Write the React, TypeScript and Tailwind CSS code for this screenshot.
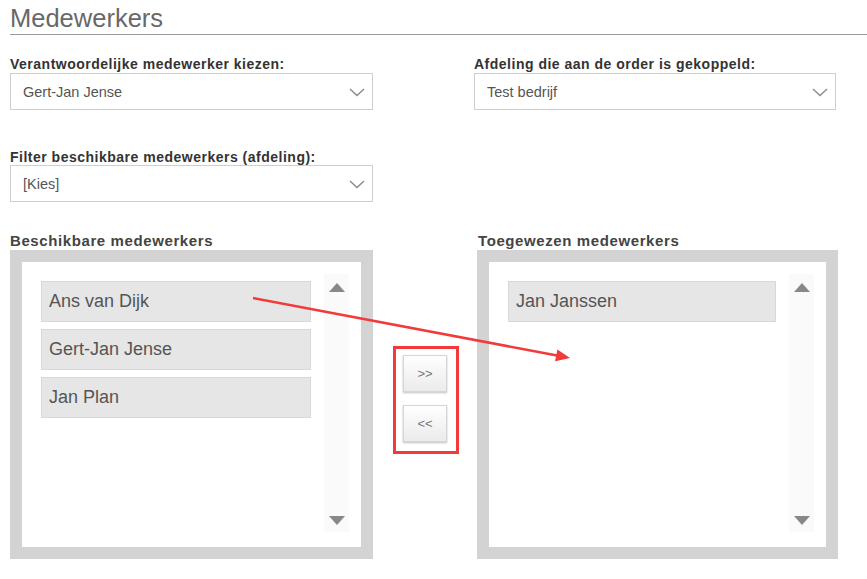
import React from "react";

function Chevron() {
  return (
    <svg width="16" height="9" viewBox="0 0 16 9" className="shrink-0">
      <polyline points="1,1 8,7.5 15,1" fill="none" stroke="#8a8a8a" strokeWidth="1.4" />
    </svg>
  );
}

function Select({ value, w }: { value: string; w: string }) {
  return (
    <div className={`${w} h-[37px] border border-[#cfcfcf] bg-white flex items-center justify-between pl-[12px] pr-[7px] pt-[2px]`}>
      <span className="text-[14.5px] text-[#555]">{value}</span>
      <Chevron />
    </div>
  );
}

function Label({ children }: { children: React.ReactNode }) {
  return <div className="text-[14px] leading-[16px] font-bold text-[#333] tracking-[0.5px]">{children}</div>;
}

function ListBox({ items, itemW, w }: { items: string[]; itemW: string; w: string }) {
  return (
    <div className={`${w} h-[309px] bg-[#d3d3d3] p-[12px]`}>
      <div className="h-full bg-white flex pt-[12px] pb-[15px] pl-[12px] pr-[12px]">
        <div className="flex-1 flex flex-col gap-[7px] pt-[7px] pl-[7px]">
          {items.map((it) => (
            <div
              key={it}
              className={`${itemW} h-[41px] bg-[#e6e6e6] border border-[#d8d8d8] flex items-center pl-[7px] text-[18px] text-[#555]`}
            >
              {it}
            </div>
          ))}
        </div>
        <div className="w-[25px] h-full bg-[#fafafa] flex flex-col items-center justify-between pt-[9px] pb-[7px]">
          <svg width="16" height="9" viewBox="0 0 16 9">
            <polygon points="8,0 16,9 0,9" fill="#888" />
          </svg>
          <svg width="16" height="9" viewBox="0 0 16 9">
            <polygon points="0,0 16,0 8,9" fill="#888" />
          </svg>
        </div>
      </div>
    </div>
  );
}

function MoveButton({ label }: { label: string }) {
  return (
    <div className="w-[44px] h-[37px] border border-[#d6d6d6] bg-gradient-to-b from-white to-[#ebebeb] shadow-[0_1px_2px_rgba(0,0,0,0.25)] flex items-center justify-center text-[13px] text-[#777]">
      {label}
    </div>
  );
}

export default function App() {
  return (
    <div
      className="relative w-full min-h-[579px] bg-white overflow-hidden"
      style={{ fontFamily: '"Liberation Sans", Arial, sans-serif' }}
    >
      <div className="pl-[10px]">
        <div className="border-b border-[#9a9a9a] pt-[3px] pb-[1px]">
          <div className="text-[25.5px] leading-[30px] text-[#686868]">Medewerkers</div>
        </div>

        <div className="mt-[21px] grid grid-cols-[363px_362px] gap-x-[101px]">
          <div>
            <Label>Verantwoordelijke medewerker kiezen:</Label>
            <div className="mt-[1px]">
              <Select value="Gert-Jan Jense" w="w-[363px]" />
            </div>
          </div>
          <div>
            <Label>Afdeling die aan de order is gekoppeld:</Label>
            <div className="mt-[1px]">
              <Select value="Test bedrijf" w="w-[362px]" />
            </div>
          </div>
        </div>

        <div className="mt-[39px]">
          <Label>Filter beschikbare medewerkers (afdeling):</Label>
          <Select value="[Kies]" w="w-[363px]" />
        </div>

        <div className="mt-[29px] flex">
          <div className="w-[363px]">
            <div className="h-[19px] text-[15px] leading-[19px] font-bold text-[#444] tracking-[0.6px]">
              Beschikbare medewerkers
            </div>
            <ListBox items={["Ans van Dijk", "Gert-Jan Jense", "Jan Plan"]} itemW="w-[270px]" w="w-[363px]" />
          </div>
          <div className="relative w-[104px] pt-[124px] flex flex-col items-center gap-[13px]">
            <MoveButton label=">>" />
            <MoveButton label="<<" />
            <div className="absolute left-[20px] top-[115px] w-[66px] h-[108px] border-[3px] border-[#f33a3a]" />
          </div>
          <div className="w-[361px]">
            <div className="h-[19px] pl-[1px] text-[15px] leading-[19px] font-bold text-[#444] tracking-[0.6px]">
              Toegewezen medewerkers
            </div>
            <ListBox items={["Jan Janssen"]} itemW="w-[268px]" w="w-[361px]" />
          </div>
        </div>
      </div>

      <svg className="absolute left-0 top-0 pointer-events-none" width="867" height="579" viewBox="0 0 867 579">
        <line x1="253" y1="298" x2="557" y2="355.5" stroke="#f23a3a" strokeWidth="2.5" />
        <polygon points="570,358 555.1,361.3 557.4,349.5" fill="#f23a3a" />
      </svg>
    </div>
  );
}
